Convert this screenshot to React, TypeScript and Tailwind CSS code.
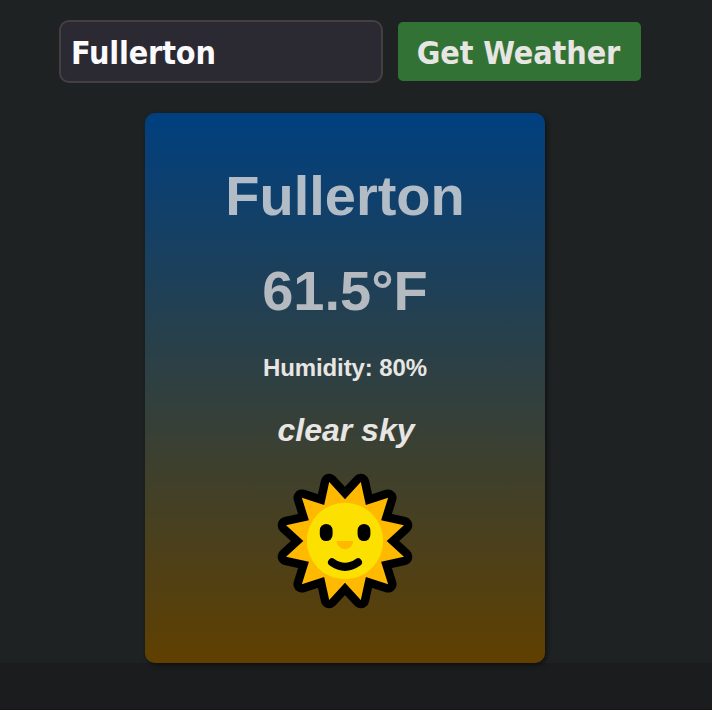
const CENTER = 75;

const starPoints = Array.from({ length: 24 }, (_, i) => {
  const radius = i % 2 === 0 ? 41.7 : 61;
  const angle = (i * Math.PI) / 12;
  const x = CENTER + radius * Math.cos(angle);
  const y = CENTER + radius * Math.sin(angle);
  return `${x.toFixed(2)},${y.toFixed(2)}`;
}).join(" ");

function SunIcon() {
  return (
    <svg width="150" height="150" viewBox="0 0 150 150" className="mt-[18px] block shrink-0">
      <polygon points={starPoints} fill="#000" stroke="#000" strokeWidth="16.8" strokeLinejoin="round" />
      <polygon points={starPoints} fill="#ffb900" />
      <circle cx="75" cy="75" r="38.2" fill="#fce100" />
      <rect x="49.8" y="58" width="12.8" height="17" rx="6.4" fill="#000" />
      <rect x="87.6" y="58" width="12.8" height="17" rx="6.4" fill="#000" />
      <path d="M66.7 75h16.6a8.3 8.3 0 0 1-16.6 0z" fill="#ffb900" />
      <path d="M62 96.2Q75 105.4 88 96.2" fill="none" stroke="#000" strokeWidth="8" strokeLinecap="round" />
    </svg>
  );
}

export default function App() {
  return (
    <div className="flex h-[710px] w-[712px] flex-col overflow-hidden border-b border-[#1a111b] bg-[#1b1c1d] font-['Liberation_Sans',sans-serif] font-bold text-[#e8e6e3]">
      <div className="h-[663px] shrink-0 bg-[#1f2223] pt-5">
        <form className="ml-[59px] flex h-[63px] items-center gap-[15px] font-['DejaVu_Sans_Condensed','DejaVu_Sans',sans-serif] text-[32px] font-stretch-condensed" onSubmit={(e) => e.preventDefault()}>
          <input
            aria-label="City"
            defaultValue="Fullerton"
            className="h-[63px] w-[324px] rounded-[10px] border-2 border-[#453f43] bg-[#2b2a33] px-[10px] pt-[2px] font-bold tracking-[-0.15px] text-[#fbfbfe] outline-none"
          />
          <button className="mb-[1px] h-[59px] w-[243px] whitespace-nowrap rounded-[5px] bg-[#327335] pr-[2px] pt-[3px] tracking-[-0.1px]">
            Get Weather
          </button>
        </form>
        <div className="ml-[145px] mt-[30px] flex h-[550px] w-[400px] flex-col items-center rounded-[10px] bg-[linear-gradient(180deg,#004080,#604000)] pt-[51px] shadow-[2px_2px_5px_rgba(0,0,0,0.5)]">
          <h1 className="text-[56px] leading-[64px] text-[#b2bcc6]">Fullerton</h1>
          <p className="mt-[31px] text-[56px] leading-[64px] text-[#b4babf]">61.5°F</p>
          <p className="mt-[31px] text-2xl leading-[28px] tracking-[-0.1px]">Humidity: 80%</p>
          <p className="mt-[30px] pl-[2px] text-[32px] italic leading-9">clear sky</p>
          <SunIcon />
        </div>
      </div>
    </div>
  );
}
